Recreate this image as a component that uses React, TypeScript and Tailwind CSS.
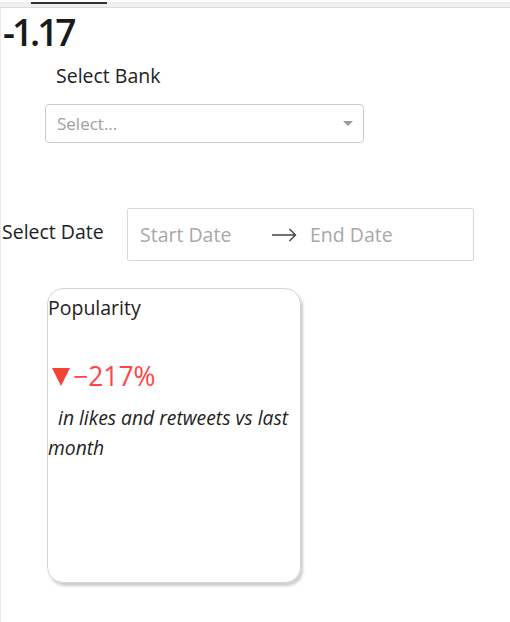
import React from 'react'

const FONT = { fontFamily: '"Open Sans", "Noto Sans", sans-serif' }

export default function App() {
  return (
    <div className="w-[510px] h-[622px] bg-white text-[#222] overflow-hidden" style={FONT}>
      {/* tab strip */}
      <div className="h-[6px] bg-[#f0f0f0] border-b border-[#dcdcdc]">
        <div className="ml-[31px] mt-[2px] w-[76px] h-[2px] bg-[#333]" />
      </div>

      <div className="border-l border-[#e8e8e8] h-[616px]">
        <div className="pl-[2px] pt-[2px] text-[37px] font-semibold leading-[44px] tracking-[-3px] text-[#1a1a1a]">-1.17</div>

        <div className="ml-[55px] mt-[9px] text-[19.5px] leading-[26px]">Select Bank</div>

        <div className="ml-[44px] mt-[15px] w-[319px] h-[39px] rounded-[4px] border border-[#cccccc] flex items-center justify-between pl-[11px] pr-[10px]">
          <span className="text-[17px] text-[#a0a0a0]">Select...</span>
          <span className="w-0 h-0 border-l-[5px] border-r-[5px] border-t-[5px] border-l-transparent border-r-transparent border-t-[#999]" />
        </div>

        <div className="mt-[65px] flex items-center">
          <span className="pl-[1px] mb-[6px] w-[104px] text-[19.5px] leading-[26px] whitespace-nowrap">Select Date</span>
          <div className="ml-[22px] w-[347px] h-[53px] border border-[#d9d9d9] rounded-[2px] flex items-center pl-[12px] text-[19.5px] text-[#a8a8a8]">
            <span className="w-[88px] whitespace-nowrap">Start Date</span>
            <svg className="ml-[44px] mt-[1px]" width="25" height="14" viewBox="0 0 25 14" fill="none">
              <path d="M0 7H23.5M17.5 1L23.5 7L17.5 13" stroke="#444" strokeWidth="1.4" />
            </svg>
            <span className="ml-[13px] whitespace-nowrap">End Date</span>
          </div>
        </div>

        <div className="ml-[46px] mt-[27px] w-[254px] h-[295px] rounded-[16px] border border-[#d4d4d4] shadow-[2px_3px_3px_rgba(0,0,0,0.2)]">
          <div className="pt-[5px] text-[19.5px] leading-[28px]">Popularity</div>
          <div className="mt-[37px] flex items-center text-[26.5px] leading-[34px] text-[#ff4545]">
            <span className="ml-[4px] mr-[3px] mt-[2px] w-0 h-0 border-l-[9.5px] border-r-[9.5px] border-t-[18px] border-l-transparent border-r-transparent border-t-[#f44336]" />
            <span>−217%</span>
          </div>
          <div className="mt-[10px] text-[19.3px] leading-[30px] italic">&nbsp; in likes and retweets vs last month</div>
        </div>
      </div>
    </div>
  )
}
